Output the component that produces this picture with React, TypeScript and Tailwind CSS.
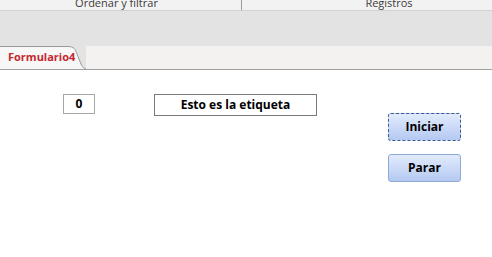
import React from 'react';

const font = { fontFamily: '"Open Sans", "Noto Sans", sans-serif' };

const App: React.FC = () => {
  return (
    <div className="w-[492px] h-[257px] bg-white overflow-hidden" style={font}>
      {/* ribbon group labels */}
      <div className="h-[11px] bg-[#f2f2f2] border-b border-[#d2d2d2] flex items-end text-[11px] leading-[14px] text-[#3c3c3c] overflow-hidden">
        <div className="w-[241px] pr-[8px] flex justify-center">
          <span className="block">Ordenar y filtrar</span>
        </div>
        <div className="w-px h-[10px] self-start bg-[#9a9a9a]"></div>
        <div className="flex-1 pl-[44px] flex justify-center">
          <span className="block">Registros</span>
        </div>
      </div>
      <div className="h-[35px] bg-[#e3e3e3]"></div>

      {/* document tab */}
      <div className="relative h-[24px] bg-[#f3f2f1] border-b border-[#a0a0a0] flex">
        <div className="relative w-[86px] h-full bg-[#f7f7f7]">
          <svg className="absolute inset-0" width="86" height="23" viewBox="0 0 86 23">
            <path d="M0 0 H68 C74 0 75 3 77 8 L81 18 C83 22 84 23 86 23 L86 0 Z" fill="#e3e3e3" />
            <path d="M0 0.5 H68 C74 0.5 75 3 77 8 L81 18 C83 22 84 22.5 86 22.5" fill="none" stroke="#9a9a9a" strokeWidth="1" />
          </svg>
          <span className="relative block pl-[8px] pt-[4px] text-[11px] leading-[14px] font-bold text-[#c4262e]">
            Formulario4
          </span>
        </div>
      </div>

      {/* form body */}
      <div className="flex pt-[24px]">
        <div className="ml-[63px] w-[32px] h-[20px] border border-[#a6a6a6] flex items-center justify-center text-[12px] font-bold text-black">
          0
        </div>
        <div className="ml-[59px] w-[163px] h-[22px] border border-[#7a7a7a] flex items-center justify-center text-[12px] font-bold text-black">
          Esto es la etiqueta
        </div>
        <div className="ml-[71px] mt-[19px] flex flex-col gap-[13px]">
          <button className="w-[73px] h-[28px] rounded-[3px] border border-dashed border-[#3b5b8c] bg-gradient-to-b from-[#e2ebfb] to-[#b4c9f2] text-[12px] font-bold text-black">
            Iniciar
          </button>
          <button className="w-[73px] h-[28px] rounded-[3px] border border-[#8fa9d6] bg-gradient-to-b from-[#e2ebfb] to-[#b4c9f2] text-[12px] font-bold text-black">
            Parar
          </button>
        </div>
      </div>
    </div>
  );
};

export default App;
